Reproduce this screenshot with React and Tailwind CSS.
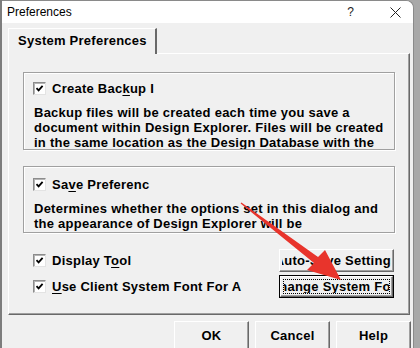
import React from 'react';

function CheckBox() {
  return (
    <div className="w-[13px] h-[13px] shrink-0 bg-white border border-t-[#8c8c8c] border-l-[#8c8c8c] border-r-[#e3e3e3] border-b-[#e3e3e3] shadow-[inset_1px_1px_0_#b4b4b4] flex items-center justify-center">
      <svg width="9" height="9" viewBox="0 0 9 9">
        <polyline points="1.5,4.2 3.6,6.4 7.6,1.8" fill="none" stroke="#000" strokeWidth="1.8" />
      </svg>
    </div>
  );
}

function CheckRow({ children }) {
  return (
    <div className="flex items-center gap-[6px] h-[15px]">
      <CheckBox />
      <span className="whitespace-nowrap leading-[15px]">{children}</span>
    </div>
  );
}

function U({ children }) {
  return <span className="underline underline-offset-[2px] decoration-1">{children}</span>;
}

function Group({ height, padTop, gap, label, lines }) {
  return (
    <div
      className="border border-[#a0a0a0] shadow-[inset_1px_1px_0_#ffffff,1px_1px_0_#ffffff] overflow-hidden"
      style={{ height, paddingTop: padTop }}
    >
      <div className="pl-[9px]">
        <CheckRow>{label}</CheckRow>
      </div>
      <div className="pl-[10px] leading-[15px] whitespace-nowrap" style={{ marginTop: gap }}>
        {lines.map((l) => (
          <div key={l}>{l}</div>
        ))}
      </div>
    </div>
  );
}

function SideButton({ children, focused }) {
  if (focused) {
    return (
      <div className="w-[115px] h-[23px] border border-black">
        <div className="h-full border border-t-white border-l-white border-r-[#696969] border-b-[#696969] shadow-[inset_-1px_-1px_0_#a0a0a0] p-[2px]">
          <div className="h-full border border-dotted border-black overflow-hidden flex items-center justify-center">
            <span className="whitespace-nowrap leading-[15px]">{children}</span>
          </div>
        </div>
      </div>
    );
  }
  return (
    <div className="w-[115px] h-[23px] border border-t-white border-l-white border-r-[#696969] border-b-[#696969] shadow-[inset_-1px_-1px_0_#a0a0a0] px-[2px]">
      <div className="h-full overflow-hidden flex items-center justify-center">
        <span className="whitespace-nowrap leading-[15px]">{children}</span>
      </div>
    </div>
  );
}

function DialogButton({ children }) {
  return (
    <div className="w-[75px] h-[27px] border-t border-l border-r border-t-white border-l-white border-r-[#696969] shadow-[inset_-1px_0_0_#a0a0a0] flex items-center justify-center">
      <span className="leading-[15px]">{children}</span>
    </div>
  );
}

export default function App() {
  return (
    <div className="w-[420px] h-[348px] relative overflow-hidden flex bg-[#a8a8a8] font-['Liberation_Sans',Arial,sans-serif] text-[13px] font-bold tracking-[0.25px] text-black">
      <div className="w-[2px] bg-[#7d7d7d]" />

      <div className="w-[412px] flex flex-col bg-[#f0f0f0] rounded-tr-[8px] border-t border-r border-[#8a8a8a] overflow-hidden">
        {/* title bar */}
        <div className="h-[26px] bg-white flex items-center pl-[5px] pr-[12px] font-normal tracking-normal text-[12px]">
          <span>Preferences</span>
          <span className="ml-auto mr-[36px] text-[12px] text-[#222]">?</span>
          <svg width="11" height="11" viewBox="0 0 11 11">
            <path d="M0.5 0.5 L10.5 10.5 M10.5 0.5 L0.5 10.5" stroke="#222" strokeWidth="1" />
          </svg>
        </div>

        {/* body */}
        <div className="pl-[6px] pt-[5px] flex flex-col">
          <div className="relative z-10 -mb-px w-[149px] h-[26px] bg-[#f0f0f0] border-t border-l border-t-white border-l-white border-r-2 border-r-[#696969] flex items-center pl-[9px] pb-[1px]">
            <span className="whitespace-nowrap">System Preferences</span>
          </div>

          <div className="w-[402px] h-[262px] border border-t-white border-l-white border-r-[#696969] border-b-[#696969] shadow-[inset_-1px_-1px_0_#a0a0a0] px-[14px] pt-[18px] flex flex-col">
            <Group
              height={78}
              padTop={8}
              gap={9}
              label={<>Create Bac<U>k</U>up I</>}
              lines={[
                'Backup files will be created each time you save a',
                'document within Design Explorer. Files will be created',
                'in the same location as the Design Database with the',
              ]}
            />
            <div className="h-[16px]" />
            <Group
              height={67}
              padTop={10}
              gap={9}
              label={<>Sa<U>v</U>e Preferenc</>}
              lines={[
                'Determines whether the options set in this dialog and',
                'the appearance of Design Explorer will be',
              ]}
            />

            <div className="mt-[16px] flex flex-col gap-[3px] pr-[1px]">
              <div className="flex items-center justify-between pl-[10px]">
                <CheckRow>Display T<U>o</U>ol</CheckRow>
                <SideButton>Auto-Save Settings</SideButton>
              </div>
              <div className="flex items-center justify-between pl-[10px]">
                <CheckRow><U>U</U>se Client System Font For A</CheckRow>
                <SideButton focused>Change System <U>F</U>ont</SideButton>
              </div>
            </div>
          </div>

          <div className="mt-[6px] flex justify-end gap-[6px] pr-[2px]">
            <DialogButton>OK</DialogButton>
            <DialogButton>Cancel</DialogButton>
            <DialogButton>Help</DialogButton>
          </div>
        </div>
      </div>

      <div className="flex-1 bg-[#a8a8a8]" />

      {/* red annotation arrow */}
      <svg className="absolute inset-0 pointer-events-none" width="420" height="348" viewBox="0 0 420 348">
        <polygon
          points="241.4,202.5 318,257 325,250 341,280 307,270 314,263 240.6,203.5"
          fill="#e8342c"
        />
      </svg>
    </div>
  );
}
